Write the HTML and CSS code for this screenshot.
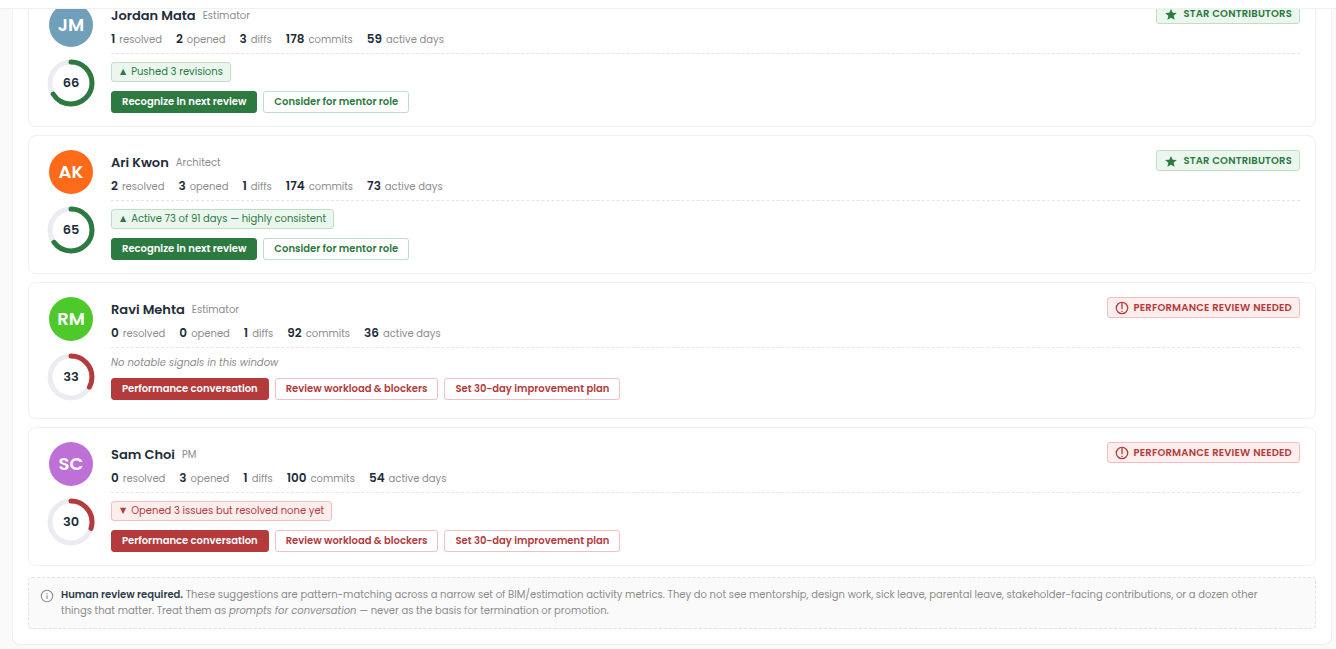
FILE: index.html
```html
<!DOCTYPE html>
<html lang="en">
<head>
    <meta charset="UTF-8">
    <meta name="viewport" content="width=device-width, initial-scale=1.0">
    <title>Team Review Suggestions</title>
    <link rel="stylesheet" href="styles.css">
</head>
<body>
    <!-- Shared icons -->
    <svg class="sprite" aria-hidden="true">
        <symbol id="icon-star" viewBox="-1 -2 26 26">
            <path d="M12 1.5l3.1 7 7.6.7-5.8 5 1.8 7.6L12 17.800l-6.700 4 1.800-7.600-5.800-5 7.600-.7z" fill="currentColor"/>
        </symbol>
        <symbol id="icon-alert" viewBox="0 0 14 14">
            <circle cx="7" cy="7" r="5.700" fill="none" stroke="currentColor" stroke-width="1.300"/>
            <path d="M7 1.500v6.800M7 9.700v1.400" fill="none" stroke="currentColor" stroke-width="1.300"/>
        </symbol>
        <symbol id="icon-info" viewBox="0 0 14 14">
            <circle cx="7" cy="7" r="5.700" fill="none" stroke="currentColor" stroke-width="1.100"/>
            <path d="M7 6.200v3.800M7 4v1.200" fill="none" stroke="currentColor" stroke-width="1.100"/>
        </symbol>
    </svg>

    <header class="topbar"></header>

    <main class="panel">
        <article class="card good">
            <div class="side">
                <div class="avatar blue">JM</div>
                <div class="ring">
                    <svg viewBox="0 0 48 48" aria-hidden="true">
                        <circle class="track" cx="24" cy="24" r="21"/>
                        <circle class="arc" cx="24" cy="24" r="21" pathLength="100" style="stroke-dasharray: 66 100"/>
                    </svg>
                    <span class="score">66</span>
                </div>
            </div>
            <div class="info">
                <div class="head">
                    <h3 class="name">Jordan Mata</h3>
                    <span class="role">Estimator</span>
                    <span class="badge"><svg class="icon" aria-hidden="true"><use href="#icon-star"/></svg>STAR CONTRIBUTORS</span>
                </div>
                <div class="stats">
                    <span><b>1</b> resolved</span>
                    <span><b>2</b> opened</span>
                    <span><b>3</b> diffs</span>
                    <span><b>178</b> commits</span>
                    <span><b>59</b> active days</span>
                </div>
                <div class="signals">
                    <span class="signal"><span class="arrow">▲</span>Pushed 3 revisions</span>
                </div>
                <div class="actions">
                    <button class="primary" type="button">Recognize in next review</button>
                    <button type="button">Consider for mentor role</button>
                </div>
            </div>
        </article>

        <article class="card good">
            <div class="side">
                <div class="avatar orange">AK</div>
                <div class="ring">
                    <svg viewBox="0 0 48 48" aria-hidden="true">
                        <circle class="track" cx="24" cy="24" r="21"/>
                        <circle class="arc" cx="24" cy="24" r="21" pathLength="100" style="stroke-dasharray: 65 100"/>
                    </svg>
                    <span class="score">65</span>
                </div>
            </div>
            <div class="info">
                <div class="head">
                    <h3 class="name">Ari Kwon</h3>
                    <span class="role">Architect</span>
                    <span class="badge"><svg class="icon" aria-hidden="true"><use href="#icon-star"/></svg>STAR CONTRIBUTORS</span>
                </div>
                <div class="stats">
                    <span><b>2</b> resolved</span>
                    <span><b>3</b> opened</span>
                    <span><b>1</b> diffs</span>
                    <span><b>174</b> commits</span>
                    <span><b>73</b> active days</span>
                </div>
                <div class="signals">
                    <span class="signal"><span class="arrow">▲</span>Active 73 of 91 days — highly consistent</span>
                </div>
                <div class="actions">
                    <button class="primary" type="button">Recognize in next review</button>
                    <button type="button">Consider for mentor role</button>
                </div>
            </div>
        </article>

        <article class="card bad">
            <div class="side">
                <div class="avatar green">RM</div>
                <div class="ring">
                    <svg viewBox="0 0 48 48" aria-hidden="true">
                        <circle class="track" cx="24" cy="24" r="21"/>
                        <circle class="arc" cx="24" cy="24" r="21" pathLength="100" style="stroke-dasharray: 33 100"/>
                    </svg>
                    <span class="score">33</span>
                </div>
            </div>
            <div class="info">
                <div class="head">
                    <h3 class="name">Ravi Mehta</h3>
                    <span class="role">Estimator</span>
                    <span class="badge"><svg class="icon" aria-hidden="true"><use href="#icon-alert"/></svg>PERFORMANCE REVIEW NEEDED</span>
                </div>
                <div class="stats">
                    <span><b>0</b> resolved</span>
                    <span><b>0</b> opened</span>
                    <span><b>1</b> diffs</span>
                    <span><b>92</b> commits</span>
                    <span><b>36</b> active days</span>
                </div>
                <p class="no-signals">No notable signals in this window</p>
                <div class="actions">
                    <button class="primary" type="button">Performance conversation</button>
                    <button type="button">Review workload &amp; blockers</button>
                    <button type="button">Set 30-day improvement plan</button>
                </div>
            </div>
        </article>

        <article class="card bad">
            <div class="side">
                <div class="avatar purple">SC</div>
                <div class="ring">
                    <svg viewBox="0 0 48 48" aria-hidden="true">
                        <circle class="track" cx="24" cy="24" r="21"/>
                        <circle class="arc" cx="24" cy="24" r="21" pathLength="100" style="stroke-dasharray: 30 100"/>
                    </svg>
                    <span class="score">30</span>
                </div>
            </div>
            <div class="info">
                <div class="head">
                    <h3 class="name">Sam Choi</h3>
                    <span class="role">PM</span>
                    <span class="badge"><svg class="icon" aria-hidden="true"><use href="#icon-alert"/></svg>PERFORMANCE REVIEW NEEDED</span>
                </div>
                <div class="stats">
                    <span><b>0</b> resolved</span>
                    <span><b>3</b> opened</span>
                    <span><b>1</b> diffs</span>
                    <span><b>100</b> commits</span>
                    <span><b>54</b> active days</span>
                </div>
                <div class="signals">
                    <span class="signal"><span class="arrow">▼</span>Opened 3 issues but resolved none yet</span>
                </div>
                <div class="actions">
                    <button class="primary" type="button">Performance conversation</button>
                    <button type="button">Review workload &amp; blockers</button>
                    <button type="button">Set 30-day improvement plan</button>
                </div>
            </div>
        </article>

        <aside class="note">
            <svg class="icon" aria-hidden="true"><use href="#icon-info"/></svg>
            <p><strong>Human review required.</strong> These suggestions are pattern-matching across a narrow set of BIM/estimation activity metrics. They do not see mentorship, design work, sick leave, parental leave, stakeholder-facing contributions, or a dozen other things that matter. Treat them as <em>prompts for conversation</em> — never as the basis for termination or promotion.</p>
        </aside>
    </main>
</body>
</html>
```
FILE: styles.css
```css
* {
    box-sizing: border-box;
}

body {
    margin: 0;
    background: #fafafa;
    color: #1f2d3a;
    font-family: Poppins, Inter, sans-serif;
    font-size: 10px;
    line-height: 16px;
    overflow: hidden;
}

h3,
p {
    margin: 0;
}

.sprite {
    display: none;
}

.topbar {
    position: sticky;
    top: 0;
    z-index: 1;
    height: 9px;
    background: #fff;
    border-bottom: 1px solid #f0f0f0;
}

.panel {
    display: flex;
    flex-direction: column;
    gap: 8px;
    margin: -37px 4px 4px 12px;
    padding: 15px;
    background: #fff;
    border: 1px solid #f0f0f0;
    border-radius: 8px;
}

.card {
    display: flex;
    gap: 14px;
    padding: 14px 15px 13px 16px;
    border: 1px solid #eeeff1;
    border-radius: 8px;
}

.good {
    --main: #2d7a41;
    --soft: #ebf6ee;
    --line: #bcdfc6;
}

.bad {
    --main: #b43a3c;
    --soft: #fdeeee;
    --line: #efbfc3;
}

.side {
    flex: none;
    width: 52px;
    padding-bottom: 4px;
    display: flex;
    flex-direction: column;
    align-items: center;
    gap: 12px;
}

.avatar {
    width: 44px;
    height: 44px;
    border-radius: 50%;
    color: #fff;
    font-size: 18px;
    font-weight: 600;
    line-height: 44px;
    text-align: center;
}

.blue { background: #709fb9; }
.orange { background: #fd6b1a; }
.green { background: #4dc92b; }
.purple { background: #be70d6; }

.ring {
    display: grid;
    place-items: center;
    width: 48px;
    height: 48px;
}

.ring svg,
.score {
    grid-area: 1 / 1;
}

.ring svg {
    width: 48px;
    height: 48px;
    transform: rotate(-90deg);
}

.ring circle {
    fill: none;
    stroke-width: 5;
}

.track { stroke: #ebecf1; }

.arc {
    stroke: var(--main);
    stroke-linecap: round;
}

.score {
    font-size: 13px;
    font-weight: 600;
}

.info {
    flex: 1;
    min-width: 0;
}

.head {
    display: flex;
    align-items: center;
    gap: 7px;
    height: 26px;
}

.name {
    font-size: 13px;
    font-weight: 600;
}

.role {
    color: #8c8c8c;
}

.badge {
    display: flex;
    align-items: center;
    gap: 5px;
    align-self: flex-start;
    height: 21px;
    margin-left: auto;
    padding: 0 7px;
    background: var(--soft);
    border: 1px solid var(--line);
    border-radius: 3px;
    color: var(--main);
    font-weight: 600;
    letter-spacing: 0.02em;
}

.icon {
    flex: none;
    width: 14px;
    height: 14px;
}

.stats {
    display: flex;
    gap: 14px;
    padding: 2px 0 5px;
    border-bottom: 1px dashed #e3e5e7;
    color: #8c8c8c;
}

.stats span {
    display: flex;
    align-items: baseline;
    gap: 4px;
}

.stats b {
    color: #1f2d3a;
    font-size: 12px;
    font-weight: 600;
}

.signals {
    display: flex;
    margin: 8px 0 9px;
}

.signal {
    display: flex;
    align-items: center;
    gap: 5px;
    height: 20px;
    padding: 0 7px 0 8px;
    background: var(--soft);
    border: 1px solid var(--line);
    border-radius: 3px;
    color: var(--main);
}

.arrow {
    font-family: "DejaVu Sans", sans-serif;
    font-size: 8px;
}

.no-signals {
    margin: 7px 0;
    color: #8c8c8c;
    font-style: italic;
}

.actions {
    display: flex;
    gap: 6px;
}

.actions button {
    height: 22px;
    padding: 0 10px;
    background: #fff;
    border: 1px solid var(--line);
    border-radius: 3px;
    color: var(--main);
    font: inherit;
    font-weight: 600;
}

.actions .primary {
    background: var(--main);
    border-color: var(--main);
    color: #fff;
}

.note {
    display: flex;
    gap: 7px;
    margin-top: 3px;
    padding: 9px 24px 9px 11px;
    background: #fafafa;
    border: 1px dashed #e3e3e3;
    border-radius: 4px;
    color: #8c8c8c;
}

.note .icon {
    height: 18px;
}

.note strong {
    color: #2f3d4a;
    font-weight: 600;
}
```
